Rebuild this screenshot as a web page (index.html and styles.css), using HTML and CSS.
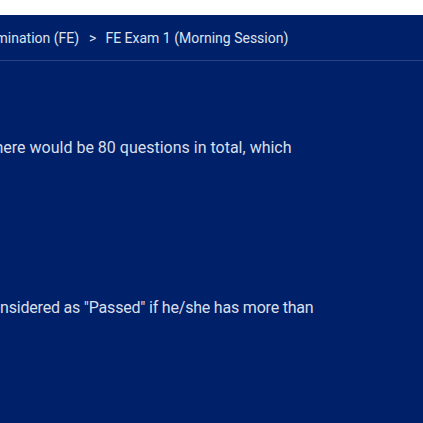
FILE: index.html
```html
<!DOCTYPE html>
<html>
<head>
<meta charset="utf-8">
<link rel="stylesheet" href="styles.css">
</head>
<body>
<div class="topbar"></div>
<main class="panel">
  <nav class="crumbs">
    <span class="crumb first">Examination (FE)</span>
    <span class="sep">&gt;</span>
    <span class="crumb">FE Exam 1 (Morning Session)</span>
  </nav>
  <section class="content">
    <p class="line one">There would be 80 questions in total, which</p>
    <p class="line two">considered as "Passed" if he/she has more than</p>
  </section>
</main>
</body>
</html>
```

FILE: styles.css
```css
html, body {
  margin: 0;
  padding: 0;
  background: #002069;
  overflow: hidden;
  height: 423px;
  font-family: Roboto, "Liberation Sans", sans-serif;
}
.topbar {
  height: 15px;
  background: #ffffff;
}
.panel {
  background: #002069;
  overflow: hidden;
}
.crumbs {
  display: flex;
  align-items: center;
  height: 45px;
  border-bottom: 1px solid #2b4383;
  font-size: 14px;
  color: #dde3ee;
  white-space: nowrap;
}
.crumb.first {
  margin-left: -27px;
}
.sep {
  margin: 0 9px 0 10px;
}
.content {
  color: #d9dfeb;
  font-size: 16px;
  white-space: nowrap;
}
.line {
  margin: 0;
  line-height: 24px;
}
.line.one {
  margin-top: 75px;
  margin-left: -15px;
}
.line.two {
  margin-top: 136px;
  margin-left: -17px;
  letter-spacing: -0.2px;
}
```
